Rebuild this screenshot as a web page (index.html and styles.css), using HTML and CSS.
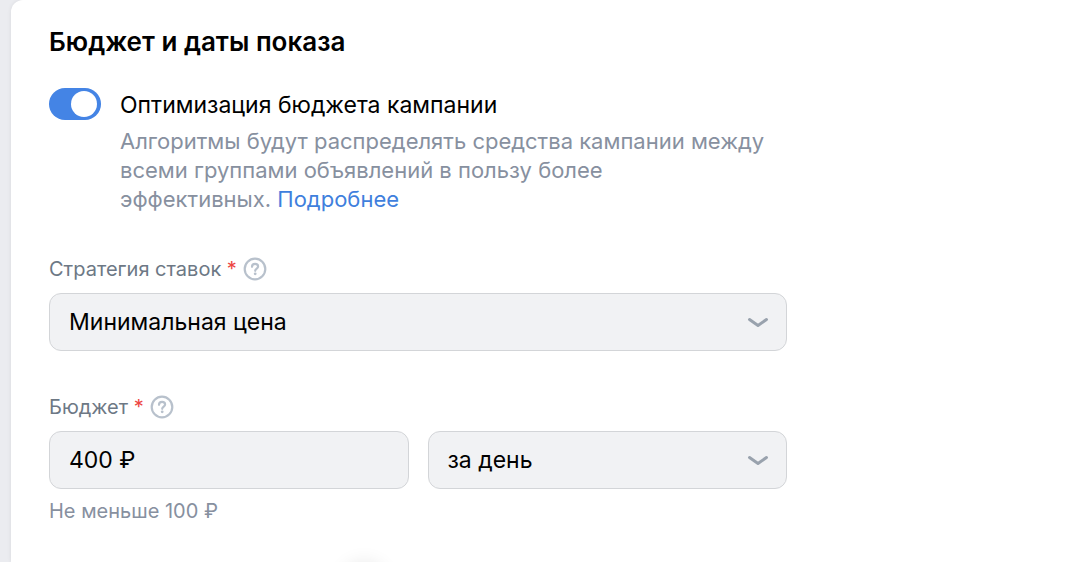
FILE: index.html
```html
<!DOCTYPE html>
<html lang="ru">
<head>
    <meta charset="UTF-8">
    <meta name="viewport" content="width=device-width, initial-scale=1.0">
    <title>Бюджет и даты показа</title>
    <link rel="stylesheet" href="styles.css">
</head>
<body>

<main class="panel">
    <form class="budget-form">
        <h1>Бюджет и даты показа</h1>

        <div class="option">
            <input type="checkbox" role="switch" id="optimization" class="switch" checked>
            <div class="option-text">
                <label for="optimization">Оптимизация бюджета кампании</label>
                <p>Алгоритмы будут распределять средства кампании между всеми группами объявлений в пользу более эффективных.&nbsp;<a href="#">Подробнее</a></p>
            </div>
        </div>

        <div class="field">
            <div class="field-label">
                <label for="strategy">Стратегия ставок <span class="required">*</span></label>
                <svg class="help" viewBox="0 0 24 24" aria-hidden="true">
                    <circle cx="12" cy="12" r="10.3"/>
                    <path d="M9 9.8c0-1.8 1.3-2.9 3.1-2.9s3 1.1 3 2.6c0 2-2.9 2.1-2.9 4.3"/>
                    <circle class="dot" cx="12.2" cy="16.8" r="1.4"/>
                </svg>
            </div>
            <div class="select">
                <select id="strategy" class="control">
                    <option>Минимальная цена</option>
                </select>
                <svg class="arrow" viewBox="0 0 22 12" aria-hidden="true"><path d="M2.5 2.5 11 8.5l8.5-6"/></svg>
            </div>
        </div>

        <div class="field">
            <div class="field-label">
                <label for="budget">Бюджет <span class="required">*</span></label>
                <svg class="help" viewBox="0 0 24 24" aria-hidden="true">
                    <circle cx="12" cy="12" r="10.3"/>
                    <path d="M9 9.8c0-1.8 1.3-2.9 3.1-2.9s3 1.1 3 2.6c0 2-2.9 2.1-2.9 4.3"/>
                    <circle class="dot" cx="12.2" cy="16.8" r="1.4"/>
                </svg>
            </div>
            <div class="row">
                <input type="text" id="budget" class="control" value="400 ₽">
                <div class="select">
                    <select class="control" aria-label="Период">
                        <option>за день</option>
                    </select>
                    <svg class="arrow" viewBox="0 0 22 12" aria-hidden="true"><path d="M2.5 2.5 11 8.5l8.5-6"/></svg>
                </div>
            </div>
            <p class="hint">Не меньше 100 ₽</p>
        </div>
    </form>
</main>

<div class="bottom-shadow"></div>

</body>
</html>
```

FILE: styles.css
```css
* {
    box-sizing: border-box;
}
body {
    margin: 0;
    padding-left: 11px;
    background-color: #ebecf0;
    font-family: Inter, "Noto Sans", sans-serif;
    color: #000;
}
h1 {
    margin: 0 0 28px;
    font-size: 26px;
    line-height: 36px;
    font-weight: 600;
}
p {
    margin: 0;
}
a {
    color: #3f7fdd;
    text-decoration: none;
}
.panel {
    min-height: 100vh;
    padding: 24px 38px;
    background-color: #fff;
    border-top-left-radius: 12px;
    box-shadow: 0 0 4px rgba(0, 0, 0, 0.08);
}
.budget-form {
    max-width: 738px;
}
.option {
    display: flex;
    gap: 19px;
    margin-bottom: 39px;
}
.option-text {
    flex: 1;
    font-size: 23px;
    line-height: 34px;
}
.option-text p {
    margin-top: 5px;
    color: #87909f;
    font-size: 22px;
    line-height: 29px;
}
.switch {
    appearance: none;
    flex: none;
    width: 52px;
    height: 32px;
    margin: 0;
    padding: 3px 4px;
    border-radius: 16px;
    background-color: #c4c8d0;
    cursor: pointer;
}
.switch::before {
    content: "";
    display: block;
    width: 26px;
    height: 26px;
    border-radius: 50%;
    background-color: #fff;
}
.switch:checked {
    background-color: #4484e5;
}
.switch:checked::before {
    margin-left: auto;
}
.field {
    margin-bottom: 40px;
}
.field:last-child {
    margin-bottom: 0;
}
.field-label {
    display: flex;
    align-items: center;
    gap: 6px;
    margin-bottom: 8px;
    color: #6d7885;
    font-size: 20px;
    line-height: 32px;
}
.required {
    color: #ed4543;
}
.help {
    width: 24px;
    height: 24px;
    fill: none;
    stroke: #b8c1cc;
    stroke-width: 2.2;
    stroke-linecap: round;
}
.help .dot {
    fill: #b8c1cc;
    stroke: none;
}
.row {
    display: grid;
    grid-template-columns: 1fr 1fr;
    gap: 19px;
}
.control {
    appearance: none;
    display: block;
    width: 100%;
    height: 58px;
    padding: 0 19px;
    border: 1px solid #d3d5d8;
    border-radius: 12px;
    background-color: #f1f2f4;
    color: #000;
    font-family: inherit;
    font-size: 23px;
}
.select {
    position: relative;
}
.arrow {
    position: absolute;
    top: 24px;
    right: 18px;
    width: 22px;
    height: 12px;
    fill: none;
    stroke: #99a2ad;
    stroke-width: 3;
    stroke-linecap: round;
    stroke-linejoin: round;
    pointer-events: none;
}
.hint {
    margin-top: 8px;
    color: #87909f;
    font-size: 20px;
    line-height: 28px;
}
/* soft glow at the bottom edge of the window */
.bottom-shadow {
    position: fixed;
    bottom: -42px;
    left: 344px;
    width: 40px;
    height: 40px;
    border-radius: 50%;
    box-shadow: 0 0 20px rgba(0, 0, 0, 0.12);
    pointer-events: none;
}
```
